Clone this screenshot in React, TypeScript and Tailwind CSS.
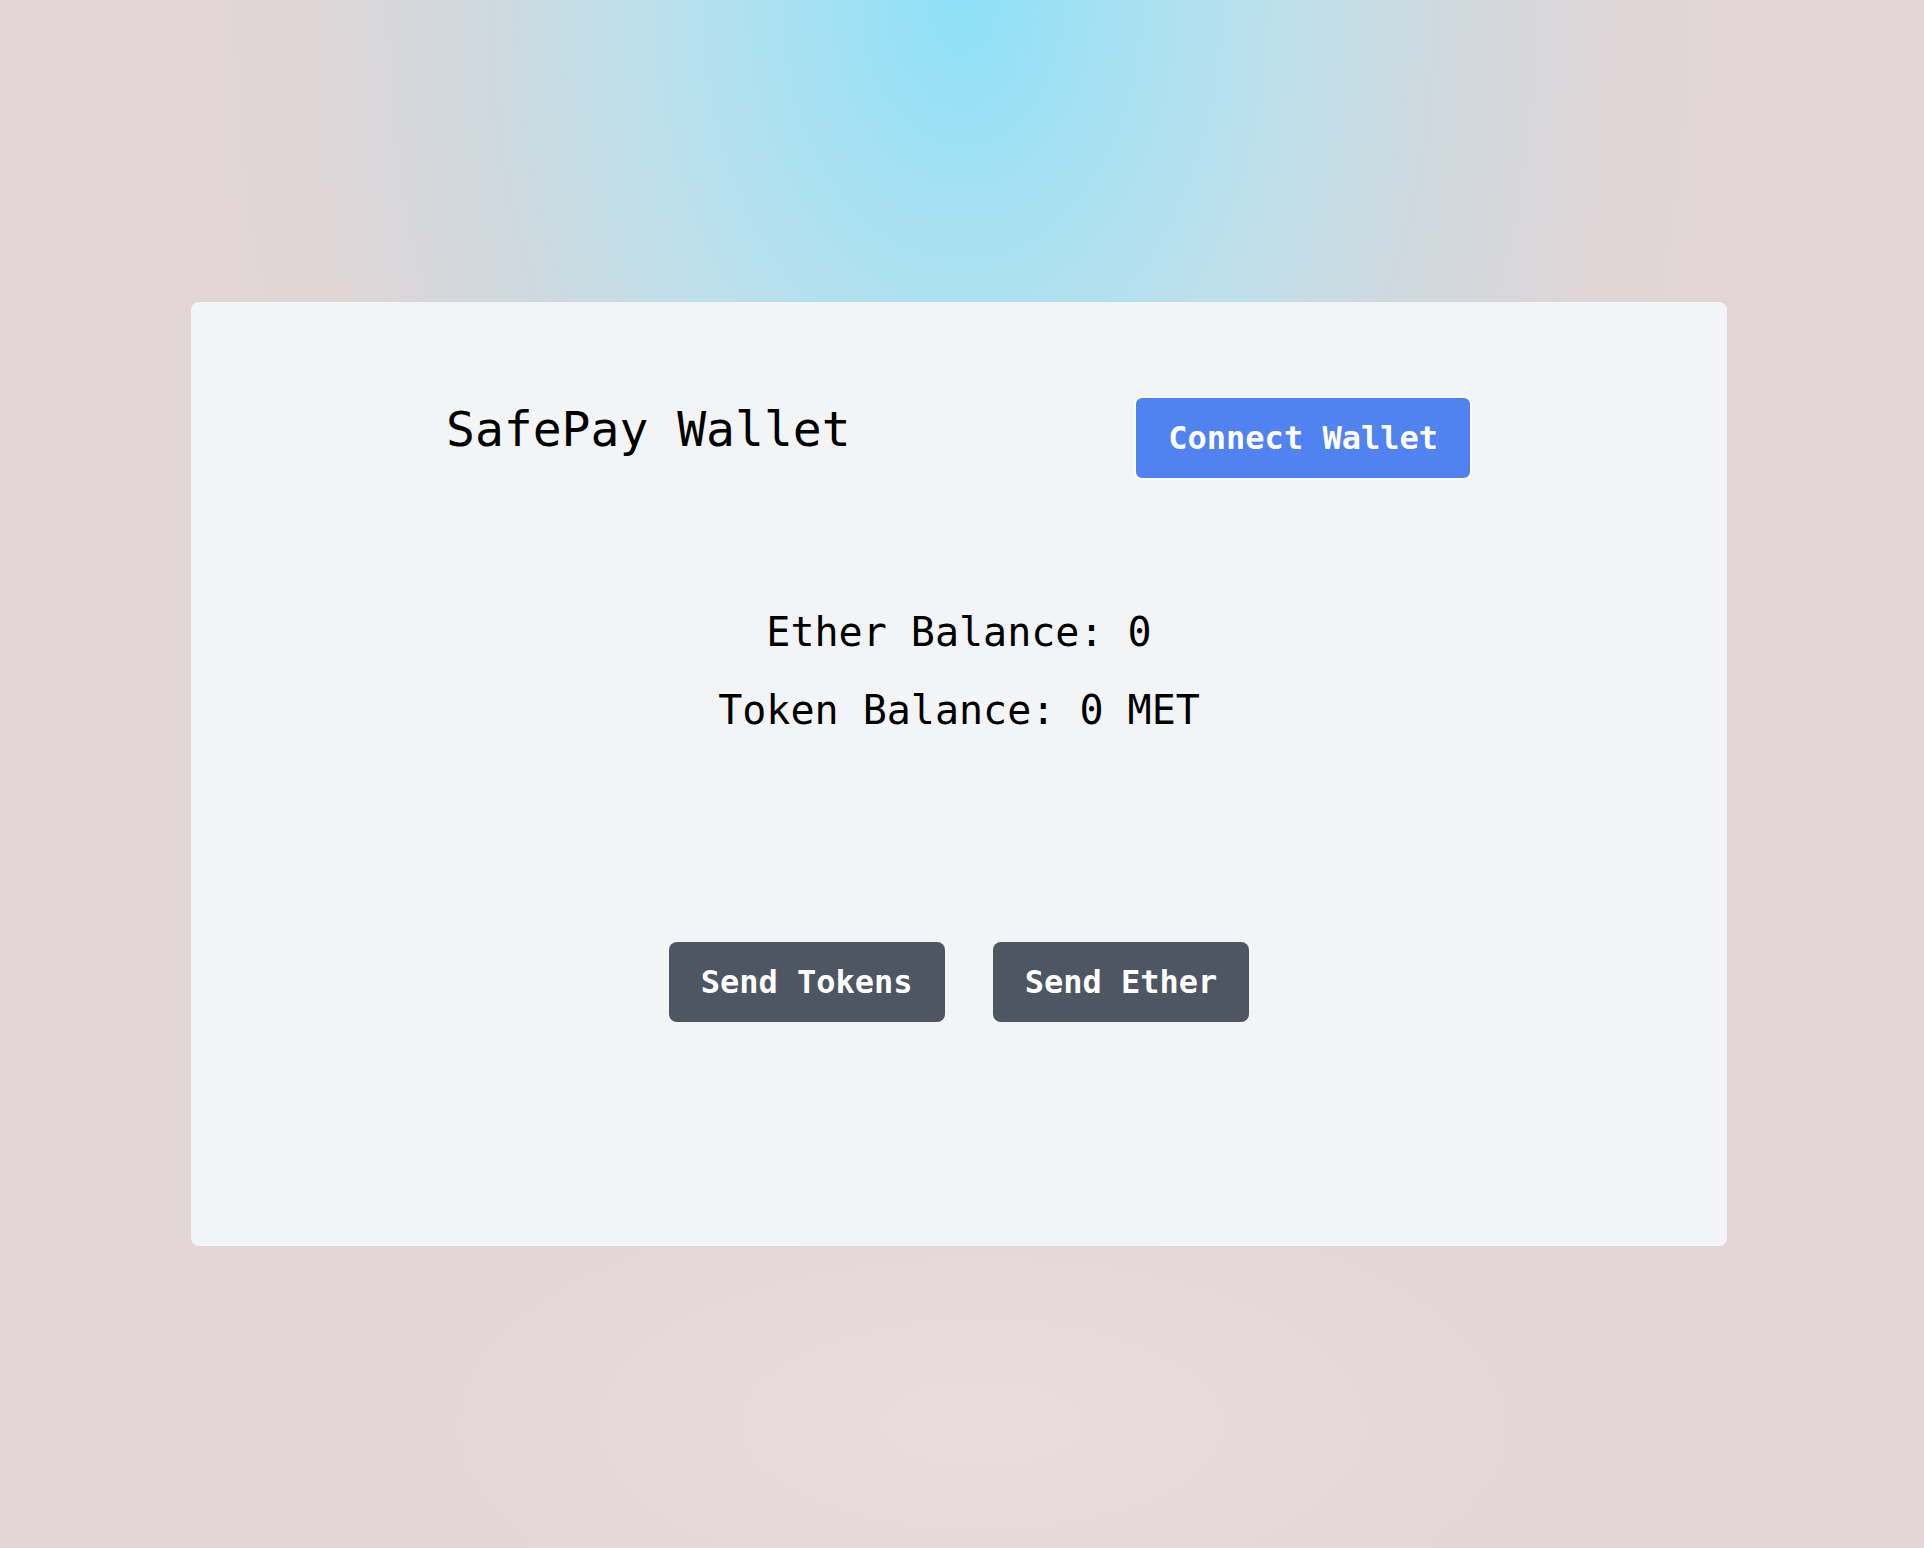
export default function App() {
  return (
    <main
      className="min-h-[1548px] w-full bg-[#e3d6d6] pt-[302px] font-['DejaVu_Sans_Mono',monospace] text-black"
      style={{
        backgroundImage:
          'radial-gradient(ellipse 800px 1150px at 50% 0%, rgba(142,224,248,1) 0%, rgba(165,225,243,0.97) 20%, rgba(185,225,238,0.9) 40%, rgba(198,218,226,0.7) 60%, rgba(216,214,219,0.3) 82%, rgba(227,214,214,0) 100%), radial-gradient(ellipse 600px 260px at 51% 92%, rgba(234,222,222,0.8) 0%, rgba(227,214,214,0) 100%)',
      }}
    >
      {/* card */}
      <div className="ml-[191px] flex h-[944px] w-[1536px] flex-col rounded-lg bg-[#f3f4f6] pt-[94px]">
        {/* header */}
        <div className="mx-auto flex w-[1026px] items-start justify-between">
          <h1 className="text-[48px] leading-[66px] font-normal">SafePay Wallet</h1>
          <button className="rounded-lg border-2 border-white bg-[#5083ef] px-8 py-4 text-[32px] leading-[48px] font-bold text-white">
            Connect Wallet
          </button>
        </div>

        {/* balances */}
        <div className="mt-[122px] flex flex-col items-center gap-[18px] text-[40px] leading-[60px]">
          <p>Ether Balance: 0</p>
          <p>Token Balance: 0 MET</p>
        </div>

        {/* actions */}
        <div className="mt-[202px] flex justify-center gap-12">
          <button className="rounded-lg bg-[#4e5563] px-8 py-4 text-[32px] leading-[48px] font-bold text-white">
            Send Tokens
          </button>
          <button className="rounded-lg bg-[#4e5563] px-8 py-4 text-[32px] leading-[48px] font-bold text-white">
            Send Ether
          </button>
        </div>
      </div>
    </main>
  );
}
